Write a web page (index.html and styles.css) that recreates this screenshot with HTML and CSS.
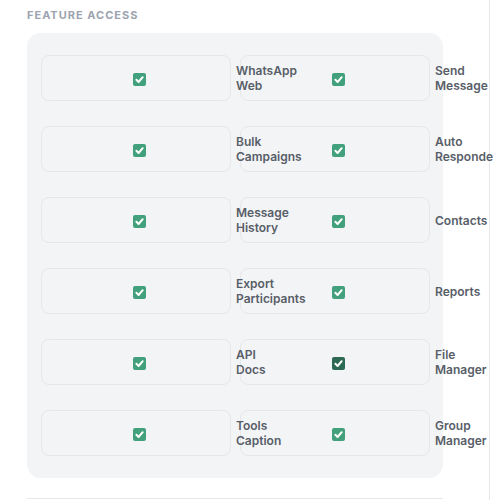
FILE: index.html
```html
<!DOCTYPE html>
<html lang="en">
<head>
  <meta charset="UTF-8" />
  <meta name="viewport" content="width=device-width, initial-scale=1.0" />
  <title>Feature Access</title>
  <link rel="stylesheet" href="styles.css">
</head>
<body>
  <div class="page">
    <h2 class="section-title">Feature Access</h2>
    <div class="features">
      <label class="feature"><span class="box"><span class="check"><svg viewBox="0 0 13 13"><path d="M3.4 6.8 5.6 9 9.7 4.2"/></svg></span></span><span class="name">WhatsApp Web</span></label>
      <label class="feature"><span class="box"><span class="check"><svg viewBox="0 0 13 13"><path d="M3.4 6.8 5.6 9 9.7 4.2"/></svg></span></span><span class="name">Send Message</span></label>
      <label class="feature"><span class="box"><span class="check"><svg viewBox="0 0 13 13"><path d="M3.4 6.8 5.6 9 9.7 4.2"/></svg></span></span><span class="name">Bulk Campaigns</span></label>
      <label class="feature"><span class="box"><span class="check"><svg viewBox="0 0 13 13"><path d="M3.4 6.8 5.6 9 9.7 4.2"/></svg></span></span><span class="name">Auto Responder</span></label>
      <label class="feature"><span class="box"><span class="check"><svg viewBox="0 0 13 13"><path d="M3.4 6.8 5.6 9 9.7 4.2"/></svg></span></span><span class="name">Message History</span></label>
      <label class="feature"><span class="box"><span class="check"><svg viewBox="0 0 13 13"><path d="M3.4 6.8 5.6 9 9.7 4.2"/></svg></span></span><span class="name">Contacts</span></label>
      <label class="feature"><span class="box"><span class="check"><svg viewBox="0 0 13 13"><path d="M3.4 6.8 5.6 9 9.7 4.2"/></svg></span></span><span class="name">Export Participants</span></label>
      <label class="feature"><span class="box"><span class="check"><svg viewBox="0 0 13 13"><path d="M3.4 6.8 5.6 9 9.7 4.2"/></svg></span></span><span class="name">Reports</span></label>
      <label class="feature"><span class="box"><span class="check"><svg viewBox="0 0 13 13"><path d="M3.4 6.8 5.6 9 9.7 4.2"/></svg></span></span><span class="name">API Docs</span></label>
      <label class="feature"><span class="box"><span class="check active"><svg viewBox="0 0 13 13"><path d="M3.4 6.8 5.6 9 9.7 4.2"/></svg></span></span><span class="name">File Manager</span></label>
      <label class="feature"><span class="box"><span class="check"><svg viewBox="0 0 13 13"><path d="M3.4 6.8 5.6 9 9.7 4.2"/></svg></span></span><span class="name">Tools Caption</span></label>
      <label class="feature"><span class="box"><span class="check"><svg viewBox="0 0 13 13"><path d="M3.4 6.8 5.6 9 9.7 4.2"/></svg></span></span><span class="name">Group Manager</span></label>
    </div>
    <div class="next-section"></div>
  </div>
</body>
</html>
```

FILE: styles.css
```css
body {
  margin: 0;
  background: #fff;
  font-family: 'Inter', 'Noto Sans', sans-serif;
  overflow: hidden;
}
.page {
  width: 462px;
  min-height: 500px;
  padding-left: 27px;
  border-right: 1px solid #e5e7eb;
}
.section-title {
  margin: 0 0 10px;
  padding-top: 7px;
  font-size: 11px;
  line-height: 16px;
  font-weight: 700;
  letter-spacing: 1px;
  text-transform: uppercase;
  color: #9ca3af;
}
.features {
  width: 389px;
  display: grid;
  grid-template-columns: 190px 190px;
  column-gap: 9px;
  row-gap: 25px;
  padding: 22px 13px 22px 14px;
  background: #f3f4f6;
  border-radius: 14px;
}
.feature {
  display: flex;
  align-items: center;
  height: 46px;
  box-sizing: border-box;
  padding-left: 12px;
  border: 1px solid #e5e7eb;
  border-radius: 8px;
  background: transparent;
  cursor: pointer;
}
.box {
  flex: 1;
  display: flex;
  justify-content: center;
  padding-top: 2px;
}
.check {
  width: 13px;
  height: 13px;
  border-radius: 2px;
  background: #43a07d;
  display: flex;
}
.check.active {
  background: #2e6a53;
}
.check svg {
  width: 13px;
  height: 13px;
  fill: none;
  stroke: #fff;
  stroke-width: 2;
  stroke-linecap: round;
  stroke-linejoin: round;
}
.name {
  width: 0;
  z-index: 1;
  margin: 0 -6px 0 11px;
  font-size: 12px;
  line-height: 15px;
  font-weight: 600;
  color: #585e68;
}
.next-section {
  width: 416px;
  margin-top: 20px;
  border-top: 1px solid #e5e7eb;
}
```
